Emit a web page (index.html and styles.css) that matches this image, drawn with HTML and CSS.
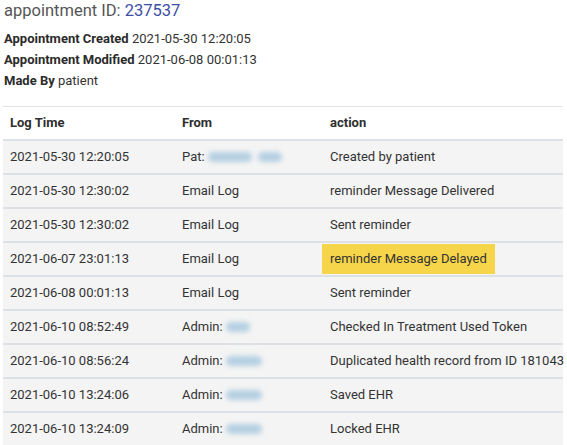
FILE: index.html
```html
<!DOCTYPE html>
<html>
<head>
<meta charset="utf-8">
<link rel="stylesheet" href="styles.css">
</head>
<body>
<div class="page">
  <h1 class="title">appointment ID: <span class="id">237537</span></h1>
  <div class="info">
    <div class="line"><b>Appointment Created</b> 2021-05-30 12:20:05</div>
    <div class="line"><b>Appointment Modified</b> 2021-06-08 00:01:13</div>
    <div class="line"><b>Made By</b> patient</div>
  </div>
  <table class="log">
    <colgroup>
      <col class="c1"><col class="c2"><col class="c3">
    </colgroup>
    <thead>
      <tr><th>Log Time</th><th>From</th><th>action</th></tr>
    </thead>
    <tbody>
      <tr><td>2021-05-30 12:20:05</td><td>Pat: <span class="blur w44"></span><span class="blur w24 gap"></span></td><td>Created by patient</td></tr>
      <tr><td>2021-05-30 12:30:02</td><td>Email Log</td><td>reminder Message Delivered</td></tr>
      <tr><td>2021-05-30 12:30:02</td><td>Email Log</td><td>Sent reminder</td></tr>
      <tr><td>2021-06-07 23:01:13</td><td>Email Log</td><td><span class="hl">reminder Message Delayed</span></td></tr>
      <tr><td>2021-06-08 00:01:13</td><td>Email Log</td><td>Sent reminder</td></tr>
      <tr><td>2021-06-10 08:52:49</td><td>Admin: <span class="blur w26"></span></td><td>Checked In Treatment Used Token</td></tr>
      <tr><td>2021-06-10 08:56:24</td><td>Admin: <span class="blur w36"></span></td><td>Duplicated health record from ID 181043</td></tr>
      <tr><td>2021-06-10 13:24:06</td><td>Admin: <span class="blur w36"></span></td><td>Saved EHR</td></tr>
      <tr><td>2021-06-10 13:24:09</td><td>Admin: <span class="blur w36"></span></td><td>Locked EHR</td></tr>
    </tbody>
  </table>
</div>
</body>
</html>
```
FILE: styles.css
```css
html, body {
  margin: 0;
  padding: 0;
  background: #ffffff;
}
body {
  font-family: Roboto, "Liberation Sans", sans-serif;
  color: #333333;
  font-size: 13px;
}
.page {
  padding: 0 4px 0 3px;
}
.title {
  margin: 0;
  padding-left: 1px;
  font-size: 16.5px;
  font-weight: 400;
  line-height: 22px;
  color: #555555;
}
.title .id {
  color: #3d4ea6;
}
.info {
  margin-top: 6px;
  padding-left: 1px;
}
.line {
  line-height: 21px;
}
.line b {
  font-weight: 700;
  color: #2b2b2b;
}
.log {
  margin-top: 15px;
  width: 560px;
  table-layout: fixed;
  border-collapse: collapse;
  border-top: 1px solid #e3e3e3;
}
.log .c1 { width: 172px; }
.log .c2 { width: 147px; }
.log .c3 { width: 241px; }
.log th {
  text-align: left;
  font-weight: 700;
  color: #2f2f2f;
  height: 32px;
  padding: 0 7px;
  line-height: 16px;
}
.log td {
  background: #f4f4f4;
  border-top: 2px solid #dde1e6;
  height: 32px;
  padding: 0 7px;
  line-height: 16px;
  white-space: nowrap;
}
.log th:nth-child(3),
.log td:nth-child(3) {
  padding-left: 8px;
}
.hl {
  display: inline-block;
  background: #f7d54a;
  margin: 0 -8px;
  padding: 7px 8px;
  color: #333;
}
.blur {
  display: inline-block;
  height: 10px;
  vertical-align: -1px;
  background: #b4cfe2;
  border-radius: 5px;
  filter: blur(2.5px);
}
.gap { margin-left: 6px; }
.w44 { width: 44px; }
.w24 { width: 24px; }
.w26 { width: 24px; }
.w36 { width: 36px; }
```
